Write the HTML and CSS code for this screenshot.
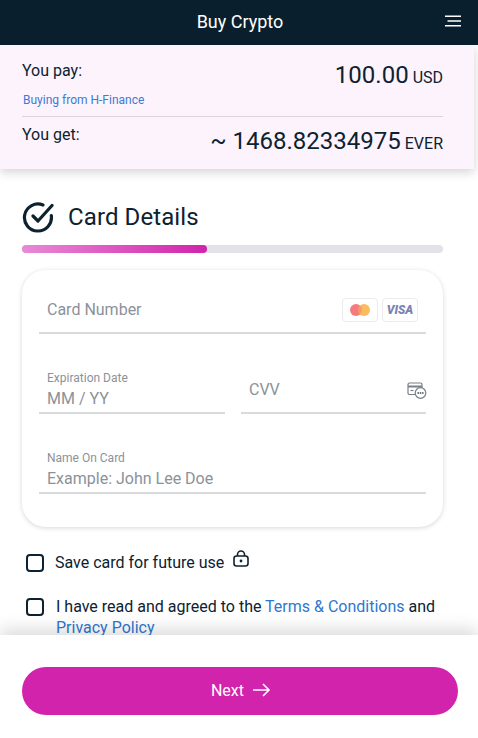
FILE: index.html
```html
<!DOCTYPE html>
<html lang="en">
<head>
    <meta charset="UTF-8">
    <meta name="viewport" content="width=device-width, initial-scale=1.0">
    <title>Buy Crypto</title>
    <link rel="stylesheet" href="styles.css">
</head>
<body>
    <div class="page">
        <header class="topbar">
            <h1 class="topbar-title">Buy Crypto</h1>
            <svg class="menu-icon" width="16" height="12" viewBox="0 0 16 12" fill="none" stroke="#fff" stroke-width="1.6">
                <path d="M0 1.200H16M2.500 6H16M0 10.800H16"/>
            </svg>
        </header>

        <main class="content">
            <section class="summary">
                <div class="summary-row summary-pay">
                    <div>
                        <div class="summary-label">You pay:</div>
                        <a class="summary-seller">Buying from H-Finance</a>
                    </div>
                    <div class="summary-amount">100.00<span class="summary-unit">USD</span></div>
                </div>
                <div class="summary-row summary-get">
                    <div class="summary-label">You get:</div>
                    <div class="summary-amount summary-amount-big">~ 1468.82334975<span class="summary-unit">EVER</span></div>
                </div>
            </section>

            <section class="details">
                <div class="step">
                    <svg width="32" height="32" viewBox="0 0 32 32" fill="none" stroke="#0c2230" stroke-width="3.200" stroke-linecap="round" stroke-linejoin="round">
                        <path d="M29.300 14.500A13.500 13.500 0 1 1 21 4"/>
                        <path d="M11 15l5 5L30 4.500"/>
                    </svg>
                    <h2 class="step-title">Card Details</h2>
                </div>
                <div class="progress"><div class="progress-fill"></div></div>

                <form class="card-form">
                    <div class="field field-number">
                        <span class="placeholder">Card Number</span>
                        <span class="card-logos">
                            <span class="card-logo">
                                <svg width="22" height="14" viewBox="0 0 22 14">
                                    <circle cx="7" cy="7" r="6" fill="#f67a7e"/>
                                    <circle cx="15" cy="7" r="6" fill="#fbbb5e"/>
                                    <path d="M11 2.500a6 6 0 0 1 0 9a6 6 0 0 1 0-9z" fill="#f79a68"/>
                                </svg>
                            </span>
                            <span class="card-logo card-logo-visa">VISA</span>
                        </span>
                    </div>
                    <div class="field-row">
                        <div class="field field-date">
                            <label class="field-label">Expiration Date</label>
                            <span class="placeholder">MM / YY</span>
                        </div>
                        <div class="field field-cvv">
                            <span class="placeholder">CVV</span>
                            <svg class="cvv-icon" width="20" height="17" viewBox="0 0 20 17" fill="none" stroke="#77808a" stroke-width="1.200">
                                <path d="M8 12.500H2.500a1.500 1.500 0 0 1-1.500-1.500V2.500A1.500 1.500 0 0 1 2.500 1h11A1.500 1.500 0 0 1 15 2.500V6"/>
                                <path d="M1 4.500h14" stroke-width="2"/>
                                <path d="M3.500 8.500h3"/>
                                <circle cx="13.500" cy="11" r="5.300" fill="#fff"/>
                                <circle cx="11.200" cy="11" r="0.900" fill="#5d656d" stroke="none"/>
                                <circle cx="13.500" cy="11" r="0.900" fill="#5d656d" stroke="none"/>
                                <circle cx="15.800" cy="11" r="0.900" fill="#5d656d" stroke="none"/>
                            </svg>
                        </div>
                    </div>
                    <div class="field field-name">
                        <label class="field-label">Name On Card</label>
                        <span class="placeholder">Example: John Lee Doe</span>
                    </div>
                </form>

                <div class="check-row check-save">
                    <span class="checkbox"></span>
                    <span>Save card for future use</span>
                    <svg class="lock-icon" width="16" height="17" viewBox="0 0 16 17" fill="none" stroke="#0c2230" stroke-width="1.600">
                        <rect x="1" y="6" width="14" height="10" rx="2.500"/>
                        <path d="M4.500 6V4.500a3.500 3.500 0 0 1 7 0V6"/>
                        <circle cx="8" cy="11" r="1.400" fill="#0c2230" stroke="none"/>
                    </svg>
                </div>
                <div class="check-row check-terms">
                    <span class="checkbox"></span>
                    <span class="terms-text">I have read and agreed to the <a class="link">Terms &amp; Conditions</a> and <a class="link">Privacy Policy</a></span>
                </div>
            </section>
        </main>

        <footer class="footer">
            <button class="next-btn" type="button">
                Next
                <svg width="20" height="14" viewBox="0 0 20 14" fill="none" stroke="#fff" stroke-width="1.600">
                    <path d="M2 7H18M12 1l6 6-6 6"/>
                </svg>
            </button>
        </footer>
    </div>
</body>
</html>
```

FILE: styles.css
```css
* {
    box-sizing: border-box;
}

html, body {
    margin: 0;
    height: 100%;
    overflow: hidden;
}

body {
    font-family: Roboto, Arial, sans-serif;
    background-color: #fff;
    color: #0c2230;
}

.page {
    height: 738px;
    display: flex;
    flex-direction: column;
}

/* top bar */
.topbar {
    height: 45px;
    flex: none;
    padding: 0 0 2px 2px;
    background-color: #0a1f2e;
    display: flex;
    align-items: center;
    justify-content: center;
    position: relative;
}

.topbar-title {
    margin: 0;
    color: #fff;
    font-size: 18px;
    font-weight: 400;
}

.menu-icon {
    position: absolute;
    right: 17px;
    top: 15px;
}

.content {
    flex: 1;
    overflow: hidden;
}

/* amounts panel */
.summary {
    width: 474px;
    height: 124px;
    padding: 0 31px 0 22px;
    background-color: #fdf3fc;
    box-shadow: 0 3px 10px rgba(0, 0, 0, 0.18);
}

.summary-row {
    display: flex;
    justify-content: space-between;
}

.summary-pay {
    height: 72px;
    padding-top: 16px;
    border-bottom: 1px solid #d8d6dc;
}

.summary-get {
    padding-top: 8px;
}

.summary-label {
    font-size: 16px;
    line-height: 20px;
}

.summary-seller {
    display: block;
    margin: 11px 0 0 1px;
    color: #3a7bd5;
    font-size: 12px;
    line-height: 16px;
}

.summary-amount {
    font-size: 24px;
    line-height: 28px;
}

.summary-amount-big {
    margin-top: 2px;
}

.summary-unit {
    margin-left: 4px;
    font-size: 16px;
}

/* card details */
.details {
    padding: 0 35px 0 22px;
}

.step {
    display: flex;
    align-items: center;
    gap: 14px;
    margin-top: 32px;
}

.step-title {
    margin: 0;
    font-size: 24px;
    font-weight: 400;
    letter-spacing: 0.1px;
}

.progress {
    height: 8px;
    margin-top: 12px;
    border-radius: 4px;
    background-color: #e2e2e8;
}

.progress-fill {
    width: 185px;
    height: 8px;
    border-radius: 4px;
    background: linear-gradient(90deg, #e88ad6, #d123ac);
}

.card-form {
    height: 257px;
    margin-top: 17px;
    padding: 0 17px;
    border-radius: 24px;
    background-color: #fff;
    box-shadow: 0 1px 5px rgba(0, 0, 0, 0.16);
}

.field {
    border-bottom: 2px solid #d9dadb;
    height: 42px;
    padding-left: 8px;
}

.placeholder {
    color: #8b9299;
    font-size: 16px;
    line-height: 20px;
}

.field-label {
    display: block;
    color: #8b9299;
    font-size: 12px;
    line-height: 14px;
}

.field-number {
    height: 64px;
    padding-top: 30px;
    display: flex;
    justify-content: space-between;
}

.card-logos {
    display: flex;
    gap: 4px;
    margin: -2px 8px 0 0;
}

.card-logo {
    width: 36px;
    height: 24px;
    border: 1px solid #ebebee;
    border-radius: 4px;
    display: flex;
    align-items: center;
    justify-content: center;
}

.card-logo-visa {
    color: #7b82b4;
    font-size: 12px;
    font-weight: 900;
    font-style: italic;
}

.field-row {
    display: flex;
    gap: 16px;
    margin-top: 37px;
}

.field-date {
    width: 186px;
    height: 43px;
}

.field-date .placeholder {
    display: block;
    margin-top: 4px;
}

.field-cvv {
    flex: 1;
    height: 43px;
    display: flex;
    justify-content: space-between;
    align-items: flex-start;
    padding-top: 9px;
}

.cvv-icon {
    margin: 2px -1px 0 0;
}

.field-name {
    margin-top: 37px;
    height: 43px;
}

.field-name .placeholder {
    display: block;
    margin-top: 4px;
}

/* checkboxes */
.check-row {
    display: flex;
    font-size: 16px;
    line-height: 21px;
}

.check-save {
    margin-top: 25px;
    align-items: center;
}

.check-terms {
    margin-top: 23px;
    margin-right: -10px;
}

.checkbox {
    flex: none;
    width: 18px;
    height: 18px;
    margin: 0 11px 0 4px;
    border: 2px solid #0c2230;
    border-radius: 4px;
}

.check-terms .checkbox {
    margin-top: 2px;
}

.terms-text {
    padding-left: 1px;
}

.lock-icon {
    margin: -8px 0 0 9px;
}

.link {
    color: #2e77d0;
}

/* bottom bar */
.footer {
    height: 103px;
    flex: none;
    padding: 32px 20px 0 22px;
    background-color: #fff;
    box-shadow: 0 -6px 16px rgba(0, 0, 0, 0.14);
    position: relative;
}

.next-btn {
    width: 100%;
    height: 48px;
    padding: 0 0 2px 2px;
    border: none;
    border-radius: 24px;
    background-color: #d123ac;
    color: #fff;
    font-family: inherit;
    font-size: 16px;
    display: flex;
    align-items: center;
    justify-content: center;
    gap: 7px;
}
```
